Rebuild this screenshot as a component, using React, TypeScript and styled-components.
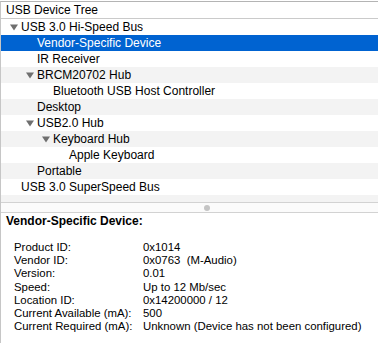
import { Fragment } from "react";
import styled, { createGlobalStyle } from "styled-components";

const GlobalStyle = createGlobalStyle`
  html, body {
    margin: 0;
    padding: 0;
    background: #ffffff;
  }
  body {
    font-family: "Liberation Sans", Arial, sans-serif;
    color: #000;
  }
`;

type Node = { label: string; level: number; open?: boolean; selected?: boolean };

const tree: Node[] = [
  { label: "USB 3.0 Hi-Speed Bus", level: 0, open: true },
  { label: "Vendor-Specific Device", level: 1, selected: true },
  { label: "IR Receiver", level: 1 },
  { label: "BRCM20702 Hub", level: 1, open: true },
  { label: "Bluetooth USB Host Controller", level: 2 },
  { label: "Desktop", level: 1 },
  { label: "USB2.0 Hub", level: 1, open: true },
  { label: "Keyboard Hub", level: 2, open: true },
  { label: "Apple Keyboard", level: 3 },
  { label: "Portable", level: 1 },
  { label: "USB 3.0 SuperSpeed Bus", level: 0 },
];

const details: [string, string][] = [
  ["Product ID:", "0x1014"],
  ["Vendor ID:", "0x0763  (M-Audio)"],
  ["Version:", "0.01"],
  ["Speed:", "Up to 12 Mb/sec"],
  ["Location ID:", "0x14200000 / 12"],
  ["Current Available (mA):", "500"],
  ["Current Required (mA):", "Unknown (Device has not been configured)"],
];

const Window = styled.div`
  width: 377px;
  height: 342px;
  margin-top: 1px;
  border-top: 1px solid #b4b4b4;
  border-left: 1px solid #c6c6c6;
  display: flex;
  flex-direction: column;
  overflow: hidden;
`;

const TreePane = styled.div`
  height: 200px;
  overflow: hidden;
  flex-shrink: 0;
`;

const Header = styled.div`
  height: 16px;
  border-bottom: 1px solid #cacaca;
  padding-left: 5px;
  font-size: 12px;
  line-height: 16px;
  background: #fff;
`;

const Row = styled.div<{ $alt: boolean; $selected?: boolean }>`
  height: 16px;
  display: flex;
  align-items: center;
  font-size: 12px;
  white-space: nowrap;
  background: ${({ $alt, $selected }) =>
    $selected ? "#0063d1" : $alt ? "#f3f3f3" : "#ffffff"};
  color: ${({ $selected }) => ($selected ? "#ffffff" : "#000000")};
`;

const Indent = styled.span<{ $level: number }>`
  width: ${({ $level }) => 9 + $level * 16}px;
  flex-shrink: 0;
`;

const Disclosure = styled.span`
  width: 11px;
  display: inline-flex;
  justify-content: flex-start;
  flex-shrink: 0;
  svg {
    display: block;
  }
`;

const Splitter = styled.div`
  height: 9px;
  flex-shrink: 0;
  border-top: 1px solid #d2d2d2;
  border-bottom: 1px solid #d2d2d2;
  background: #fbfbfb;
  display: flex;
  align-items: center;
  justify-content: center;
  padding-left: 34px;
`;

const Dimple = styled.div`
  width: 6px;
  height: 6px;
  border-radius: 50%;
  background: #c4c4c4;
`;

const DetailPane = styled.div`
  flex: 1;
  padding: 1px 0 0 5px;
`;

const Title = styled.div`
  font-size: 12px;
  font-weight: bold;
  line-height: 14px;
  margin-bottom: 13px;
`;

const Grid = styled.div`
  display: grid;
  grid-template-columns: 129px 1fr;
  padding-left: 8px;
  font-size: 11.4px;
  line-height: 13.2px;
  white-space: pre;
`;

const Arrow = () => (
  <svg width="8" height="7" viewBox="0 0 8 7">
    <path d="M0 0.5 L8 0.5 L4 6.5 Z" fill="#6f6f6f" />
  </svg>
);

export default function App() {
  const rows = [...tree, { label: "", level: 0 }];
  return (
    <>
      <GlobalStyle />
      <Window>
        <TreePane>
          <Header>USB Device Tree</Header>
          {rows.map((n, i) => (
            <Row key={i} $alt={i % 2 === 1} $selected={n.selected}>
              <Indent $level={n.level} />
              <Disclosure>{n.open ? <Arrow /> : null}</Disclosure>
              {n.label}
            </Row>
          ))}
        </TreePane>
        <Splitter>
          <Dimple />
        </Splitter>
        <DetailPane>
          <Title>Vendor-Specific Device:</Title>
          <Grid>
            {details.map(([k, v]) => (
              <Fragment key={k}>
                <span>{k}</span>
                <span>{v}</span>
              </Fragment>
            ))}
          </Grid>
        </DetailPane>
      </Window>
    </>
  );
}
